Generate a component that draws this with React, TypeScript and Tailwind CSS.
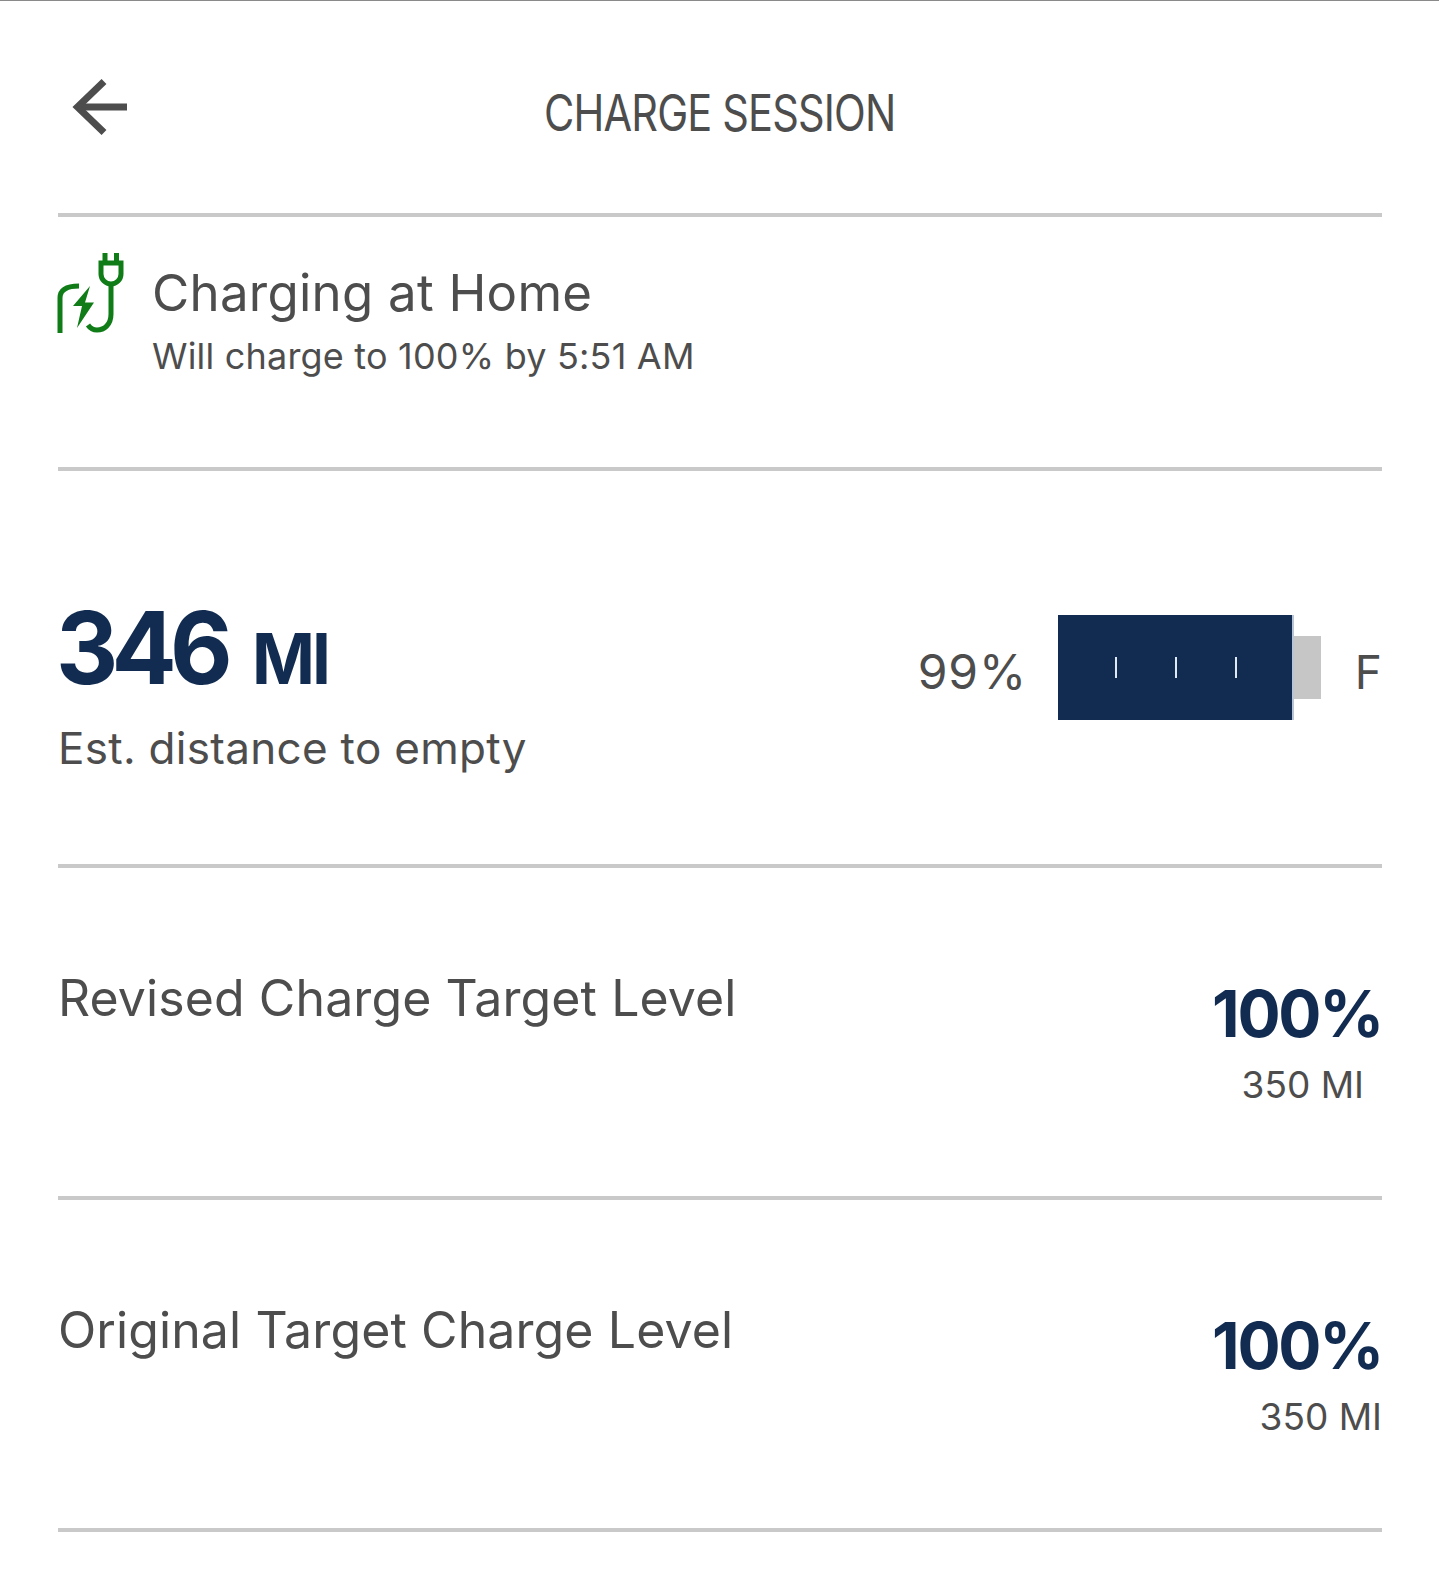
function BackArrow() {
  return (
    <svg className="absolute top-[74px] left-[10px]" width="64" height="64" viewBox="0 0 64 64" fill="none" stroke="#4d4d4d" strokeWidth="7">
      <path d="M36 6.500L9.500 32L36 57.500" />
      <path d="M9.500 32H59" />
    </svg>
  );
}

function PlugIcon() {
  return (
    <svg className="-ml-[3px]" width="72" height="86" viewBox="0 0 72 86" fill="none" stroke="#0f7c17" strokeWidth="5">
      <path d="M50 3V13M61.500 3V13" />
      <path d="M46 13H66V24A10 10 0 0 1 46 24Z" />
      <path d="M56 35V64C56 75 49 80 42 80C38 80 35 78 33 75" />
      <path d="M5 83V48C5 40 12 36 24 36" />
      <path d="M35 36L18 56H27L22 78L39 52.500H30L35 36Z" fill="#0f7c17" stroke="none" />
    </svg>
  );
}

function Battery() {
  return (
    <div className="flex items-center">
      <div className="flex h-[105px] w-[236px] items-center justify-center gap-[58px] border-r-2 border-[#b9c4d6] bg-[#122b50] pl-[3px]">
        <span className="h-[21px] w-[2px] bg-[#dfe9f3]" />
        <span className="h-[21px] w-[2px] bg-[#dfe9f3]" />
        <span className="h-[21px] w-[2px] bg-[#dfe9f3]" />
      </div>
      <div className="h-[63px] w-[27px] bg-[#c6c6c6]" />
    </div>
  );
}

function TargetRow({ label, milesClass }: { label: string; milesClass: string }) {
  return (
    <section className="flex h-[332px] justify-between border-b-4 border-[#c9c9c9] pt-[94px]">
      <div className="text-[50px] leading-[72px] tracking-[0.1px] text-[#4d4d4d]">{label}</div>
      <div className="flex flex-col items-end pt-[17px]">
        <div className="text-[64px] leading-[70px] font-bold tracking-[-2.25px] text-[#122b50]">100%</div>
        <div className={`mt-[14px] text-[37px] leading-[44px] text-[#4d4d4d] ${milesClass}`}>350 MI</div>
      </div>
    </section>
  );
}

export default function App() {
  return (
    <div className="min-h-[1571px] w-[1439px] border-t border-[#8a8a8a] bg-white pr-[57px] pl-[58px] font-['Inter','Open_Sans',sans-serif]">
      <header className="relative flex h-[216px] items-start justify-center border-b-4 border-[#c9c9c9]">
        <BackArrow />
        <h1 className="mt-[80px] scale-x-[0.83] text-[50px] leading-[64px] tracking-[-1px] whitespace-nowrap text-[#4d4d4d]">CHARGE SESSION</h1>
      </header>

      <section className="flex h-[254px] items-start border-b-4 border-[#c9c9c9] pt-[33px]">
        <PlugIcon />
        <div className="ml-[25px]">
          <div className="mt-[7px] text-[51px] leading-[72px] tracking-[0.25px] text-[#4d4d4d]">Charging at Home</div>
          <div className="mt-[2px] text-[36px] leading-[50px] tracking-[0.2px] text-[#4d4d4d]">Will charge to 100% by 5:51 AM</div>
        </div>
      </section>

      <section className="flex h-[397px] items-start justify-between border-b-4 border-[#c9c9c9] pt-[119px]">
        <div>
          <div className="-ml-[2px] flex origin-left scale-x-[0.965] items-baseline gap-[27px] font-bold text-[#122b50]">
            <span className="text-[100px] leading-[116px] tracking-[-7px]">346</span>
            <span className="text-[70px] leading-[116px] tracking-[-3px]">MI</span>
          </div>
          <div className="text-[44px] leading-[62px] tracking-[0.3px] text-[#4d4d4d]">Est. distance to empty</div>
        </div>
        <div className="flex items-center pt-[25px]">
          <span className="mr-[31px] pt-[8px] text-[48px] leading-[60px] tracking-[0.8px] text-[#4d4d4d]">99%</span>
          <Battery />
          <span className="ml-[34px] pt-[8px] text-[46px] leading-[60px] text-[#4d4d4d]">F</span>
        </div>
      </section>

      <TargetRow label="Revised Charge Target Level" milesClass="mr-[18px]" />
      <TargetRow label="Original Target Charge Level" milesClass="" />
    </div>
  );
}
